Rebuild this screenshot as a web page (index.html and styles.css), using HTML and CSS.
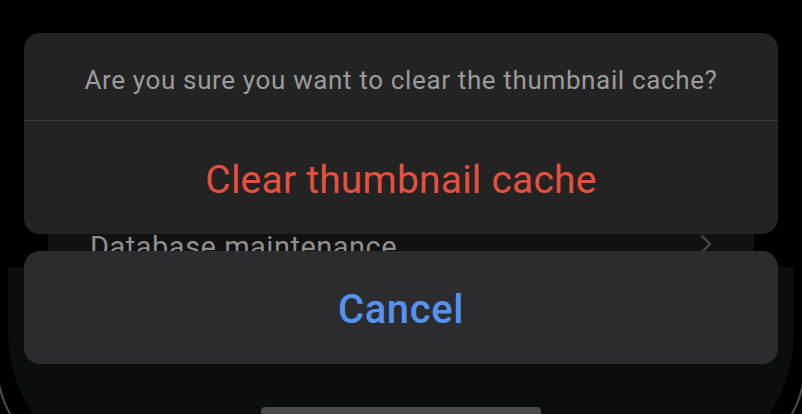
FILE: index.html
```html
<!DOCTYPE html>
<html>
<head>
<meta charset="utf-8">
<link rel="stylesheet" href="styles.css">
</head>
<body>
<div class="screen">
  <div class="backdrop">
    <div class="row">
      <span class="row-label">Database maintenance</span>
      <svg class="chev" width="12" height="20" viewBox="0 0 12 20"><path d="M2 2 L10 10 L2 18" fill="none" stroke="#474747" stroke-width="2.4" stroke-linecap="round" stroke-linejoin="round"/></svg>
    </div>
    <div class="bezel"></div>
    <div class="sheet"></div>
    <div class="home"></div>
  </div>
  <div class="action-sheet">
    <div class="group">
      <div class="message">Are you sure you want to clear the thumbnail cache?</div>
      <div class="action destructive">Clear thumbnail cache</div>
    </div>
    <div class="group cancel-group">
      <div class="action cancel">Cancel</div>
    </div>
  </div>
</div>
</body>
</html>
```

FILE: styles.css
```css
html, body {
  margin: 0;
  padding: 0;
  background: #000;
  width: 802px;
  height: 414px;
  overflow: hidden;
  font-family: Roboto, "Noto Sans", sans-serif;
}
.screen {
  position: relative;
  width: 802px;
  height: 414px;
  overflow: hidden;
}
.backdrop {
  position: absolute;
  inset: 0;
}
.row {
  position: absolute;
  left: 48px;
  top: 200px;
  width: 706px;
  height: 66px;
  background: #111111;
  display: flex;
  align-items: flex-end;
  justify-content: space-between;
  box-sizing: border-box;
  padding: 0 42px 10px 42px;
}
.row-label {
  color: #8e8e8e;
  font-size: 29px;
  letter-spacing: 0.5px;
  line-height: 30px;
  position: relative;
  top: 6px;
}
.chev {
  position: relative;
  top: -2px;
}
.bezel {
  position: absolute;
  left: -4px;
  right: -4px;
  top: 280px;
  height: 185px;
  border-radius: 0 0 103px 103px;
  border: 2px solid #4a4a4a;
  border-top: none;
}
.sheet {
  position: absolute;
  left: 8px;
  right: 8px;
  top: 267px;
  height: 211px;
  background: #0c0d0d;
  border-radius: 0 0 145px 145px;
}
.home {
  position: absolute;
  left: 261px;
  width: 280px;
  top: 407px;
  height: 12px;
  border-radius: 4px;
  background: #4a4a4a;
}
.action-sheet {
  position: relative;
  padding: 33px 24px 0 24px;
  display: flex;
  flex-direction: column;
  gap: 17px;
}
.group {
  background: #232323;
  border-radius: 16px;
  overflow: hidden;
}
.message {
  height: 88px;
  display: flex;
  align-items: center;
  justify-content: center;
  color: #9b9b9b;
  font-size: 26px;
  letter-spacing: 0.64px;
  border-bottom: 1px solid #3b3b3b;
  box-sizing: border-box;
  padding-top: 6px;
}
.action {
  height: 113px;
  display: flex;
  align-items: center;
  justify-content: center;
  box-sizing: border-box;
}
.destructive {
  color: #e5503f;
  font-size: 39px;
  letter-spacing: 0.2px;
  padding-top: 5px;
}
.cancel-group {
  background: #2c2c2e;
}
.cancel {
  color: #5592f0;
  font-size: 40px;
  letter-spacing: 0.6px;
  font-weight: 500;
  padding-top: 4px;
}
```
